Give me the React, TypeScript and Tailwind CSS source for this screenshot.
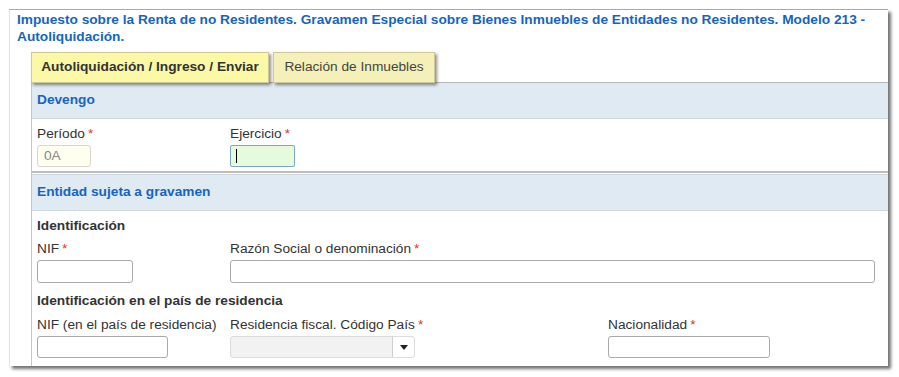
import React from "react";

const font = { fontFamily: '"Liberation Sans", Arial, sans-serif' };

function Req() {
  return <span className="text-[#d9342b] ml-[3px]">*</span>;
}

function Label({ text, req }: { text: string; req?: boolean }) {
  return (
    <div className="text-[13.7px] leading-[16px] text-[#333] whitespace-nowrap">
      {text}
      {req && <Req />}
    </div>
  );
}

function Field({
  label,
  req,
  width,
  h = 23,
  gap = 3,
}: {
  label: string;
  req?: boolean;
  width: string;
  h?: number;
  gap?: number;
}) {
  return (
    <div className="flex flex-col" style={{ gap }}>
      <Label text={label} req={req} />
      <div
        className={`${width} border border-[#aaa] rounded-[3px] bg-white`}
        style={{ height: h }}
      />
    </div>
  );
}

function SectionHeader({ title }: { title: string }) {
  return (
    <div className="h-[36px] bg-[#dfeaf3] border-b border-[#cfd6dc] flex items-center pl-[5px]">
      <span className="text-[13.7px] font-bold text-[#1565c0]">{title}</span>
    </div>
  );
}

export default function App() {
  return (
    <div className="w-[899px] h-[377px] bg-white overflow-hidden" style={font}>
      <div className="ml-[9px] mt-[9px] w-[879px] h-[357px] bg-white border-t border-t-[#a9a9a9] border-l border-l-[#e2e2e2] shadow-[3px_3px_3px_rgba(0,0,0,0.55)]">
        {/* title */}
        <div className="pl-[7px] pt-[1px] pr-[10px] text-[13.7px] leading-[17px] font-bold text-[#1565c0]">
          Impuesto sobre la Renta de no Residentes. Gravamen Especial sobre Bienes Inmuebles de Entidades no
          Residentes. Modelo 213 - Autoliquidación.
        </div>

        <div className="ml-[21px] mt-[7px]">
          {/* tabs */}
          <div className="flex gap-[4px] h-[31px] border-b border-[#b5b5b5]">
            <div className="w-[238px] h-[31px] bg-[#fbf8a6] border border-[#cfc99a] shadow-[2px_2px_3px_rgba(0,0,0,0.45)] flex items-center justify-center text-[13.7px] font-bold text-[#333] relative z-10">
              Autoliquidación / Ingreso / Enviar
            </div>
            <div className="w-[162px] h-[31px] bg-[#f4f0b8] border border-[#cfc99a] shadow-[2px_2px_3px_rgba(0,0,0,0.45)] flex items-center justify-center text-[13.7px] text-[#444] relative z-10">
              Relación de Inmuebles
            </div>
          </div>

          {/* panel */}
          <div className="border-l border-[#c8c8c8] h-[283px]">
            <SectionHeader title="Devengo" />
            <div className="pl-[5px] pt-[7px] h-[54px] flex border-b-2 border-[#bdbdbd]">
              <div className="w-[193px] flex flex-col gap-[3px]">
                <Label text="Período" req />
                <div className="w-[54px] h-[22px] border border-[#d8d8c8] rounded-[3px] bg-[#fffff0] flex items-center pl-[6px] text-[13.7px] text-[#888]">
                  0A
                </div>
              </div>
              <div className="flex flex-col gap-[3px]">
                <Label text="Ejercicio" req />
                <div className="w-[65px] h-[22px] border border-[#79a6d2] rounded-[2px] bg-[#e6fbdc] flex items-center pl-[5px]">
                  <span className="w-[1px] h-[14px] bg-black" />
                </div>
              </div>
            </div>
            <div className="mt-[1px] border-t border-[#cfd6dc]">
              <SectionHeader title="Entidad sujeta a gravamen" />
            </div>
            <div className="pl-[5px] pt-[7px]">
              <div className="text-[13.7px] leading-[16px] font-bold text-[#333]">Identificación</div>
              <div className="flex mt-[7px]">
                <div className="w-[193px]">
                  <Field label="NIF" req width="w-[96px]" />
                </div>
                <Field label="Razón Social o denominación" req width="w-[645px]" />
              </div>
              <div className="mt-[10px] text-[13.7px] leading-[16px] font-bold text-[#333]">
                Identificación en el país de residencia
              </div>
              <div className="flex mt-[8px]">
                <div className="w-[193px]">
                  <Field label="NIF (en el país de residencia)" width="w-[131px]" h={22} />
                </div>
                <div className="w-[378px] flex flex-col gap-[3px]">
                  <Label text="Residencia fiscal. Código País" req />
                  <div className="w-[185px] h-[22px] border border-[#dcdcdc] rounded-[3px] bg-[#f2f2f2] flex justify-end">
                    <div className="w-[22px] h-full border-l border-[#cfcfcf] bg-white rounded-r-[3px] flex items-center justify-center">
                      <svg width="8" height="5" viewBox="0 0 8 5">
                        <path d="M0 0 L8 0 L4 5 Z" fill="#222" />
                      </svg>
                    </div>
                  </div>
                </div>
                <Field label="Nacionalidad" req width="w-[162px]" h={22} />
              </div>
            </div>
          </div>
        </div>
      </div>
    </div>
  );
}
